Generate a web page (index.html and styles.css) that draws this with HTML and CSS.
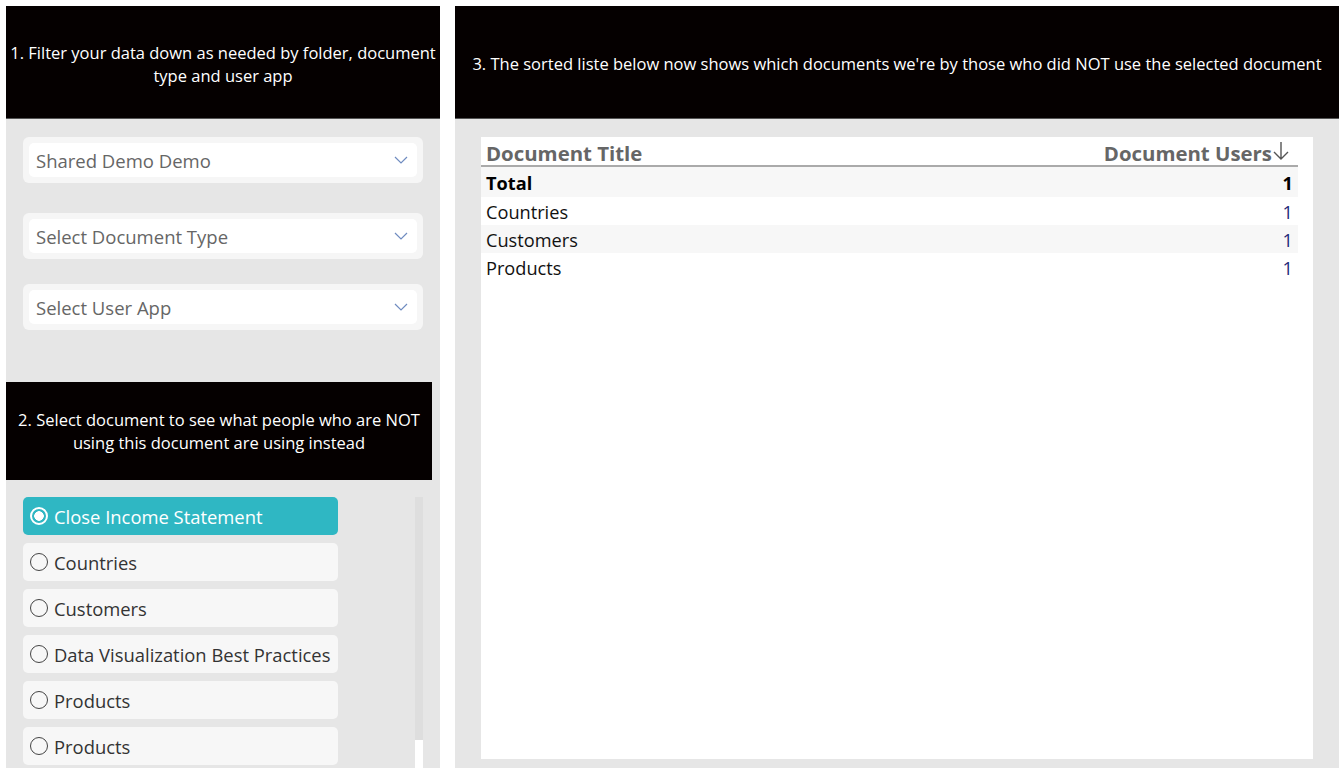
FILE: index.html
```html
<!DOCTYPE html>
<html lang="en">
<head>
    <meta charset="UTF-8">
    <title>Document Usage</title>
    <link rel="stylesheet" href="styles.css">
</head>
<body>
    <div class="page">
        <div class="left-panel">
            <div class="banner">1. Filter your data down as needed by folder, document type and user app</div>

            <div class="filters">
                <div class="dropdown">
                    <div class="dropdown-inner">
                        <span>Shared Demo Demo</span>
                        <svg class="chevron" width="14" height="8" viewBox="0 0 14 8"><path d="M1 1 L7 7 L13 1" fill="none" stroke="#6f8cc0" stroke-width="1.2"/></svg>
                    </div>
                </div>
                <div class="dropdown second">
                    <div class="dropdown-inner">
                        <span>Select Document Type</span>
                        <svg class="chevron" width="14" height="8" viewBox="0 0 14 8"><path d="M1 1 L7 7 L13 1" fill="none" stroke="#6f8cc0" stroke-width="1.2"/></svg>
                    </div>
                </div>
                <div class="dropdown third">
                    <div class="dropdown-inner">
                        <span>Select User App</span>
                        <svg class="chevron" width="14" height="8" viewBox="0 0 14 8"><path d="M1 1 L7 7 L13 1" fill="none" stroke="#6f8cc0" stroke-width="1.2"/></svg>
                    </div>
                </div>
            </div>

            <div class="banner banner-small">2. Select document to see what people who are NOT using this document are using instead</div>

            <div class="doc-list">
                <div class="items">
                    <div class="item selected"><span class="radio"></span>Close Income Statement</div>
                    <div class="item"><span class="radio"></span>Countries</div>
                    <div class="item"><span class="radio"></span>Customers</div>
                    <div class="item"><span class="radio"></span>Data Visualization Best Practices</div>
                    <div class="item"><span class="radio"></span>Products</div>
                    <div class="item"><span class="radio"></span>Products</div>
                </div>
                <div class="scrollbar"><div class="thumb"></div></div>
            </div>
        </div>

        <div class="right-panel">
            <div class="banner banner-wide">3. The sorted liste below now shows which documents we're by those who did NOT use the selected document</div>

            <div class="table-card">
                <div class="table">
                    <div class="row head">
                        <span>Document Title</span>
                        <span class="users">Document Users<svg class="sort" width="18" height="20" viewBox="0 0 18 20"><path d="M9 1 V18 M2 11 L9 18 L16 11" fill="none" stroke="#555" stroke-width="1.4"/></svg></span>
                    </div>
                    <div class="row total">
                        <span>Total</span>
                        <span>1</span>
                    </div>
                    <div class="row">
                        <span>Countries</span>
                        <span class="num">1</span>
                    </div>
                    <div class="row alt">
                        <span>Customers</span>
                        <span class="num">1</span>
                    </div>
                    <div class="row">
                        <span>Products</span>
                        <span class="num">1</span>
                    </div>
                </div>
            </div>
        </div>
    </div>
</body>
</html>
```

FILE: styles.css
```css
* {
    margin: 0;
    padding: 0;
    box-sizing: border-box;
    font-family: 'Open Sans', 'Noto Sans', sans-serif;
}

body {
    background: #fff;
    width: 1339px;
    height: 768px;
    overflow: hidden;
}

.page {
    display: flex;
    gap: 15px;
    padding: 6px 0 0 6px;
    height: 768px;
}

.left-panel {
    width: 434px;
    background: #e6e6e6;
    height: 762px;
}

.right-panel {
    flex: 1;
    background: #e6e6e6;
    height: 762px;
    display: flex;
    flex-direction: column;
}

.banner {
    background: #050000;
    color: #fff;
    height: 113px;
    display: flex;
    align-items: center;
    justify-content: center;
    text-align: center;
    font-size: 16.5px;
    line-height: 23px;
    padding: 3px 2px 0 2px;
    border-bottom: 1px solid #555;
}

.banner-small {
    width: 426px;
    height: 98px;
    margin-top: 52px;
    border-bottom: none;
    padding: 0 4px 0 4px;
}

.banner-wide {
    white-space: nowrap;
}

.filters {
    padding: 18px 17px 0 17px;
}

.dropdown {
    background: #f6f6f6;
    border-radius: 6px;
    padding: 6px;
    height: 46px;
}

.dropdown.second {
    margin-top: 30px;
}

.dropdown.third {
    margin-top: 25px;
}

.dropdown-inner {
    background: #fff;
    border-radius: 5px;
    height: 34px;
    display: flex;
    align-items: center;
    justify-content: space-between;
    padding: 0 8px 0 7px;
    color: #666;
    font-size: 18.5px;
}

.chevron {
    margin-right: 1px;
}

.doc-list {
    display: flex;
    padding: 17px 0 0 17px;
}

.items {
    width: 315px;
    display: flex;
    flex-direction: column;
    gap: 8px;
}

.item {
    height: 38px;
    background: #f7f7f7;
    border-radius: 5px;
    display: flex;
    align-items: center;
    padding-left: 7px;
    font-size: 18.4px;
    color: #333;
    white-space: nowrap;
}

.item.selected {
    background: #2fb7c3;
    color: #fff;
}

.radio {
    width: 18px;
    height: 18px;
    border: 1.5px solid #444;
    border-radius: 50%;
    margin-right: 6px;
    flex-shrink: 0;
}

.item.selected .radio {
    border: 2px solid #fff;
    background: radial-gradient(circle, #fff 0 4.5px, transparent 5px);
}

.scrollbar {
    width: 8px;
    margin-left: 77px;
    height: 271px;
    background: #fff;
}

.thumb {
    height: 243px;
    background: #dedede;
}

.table-card {
    background: #fff;
    margin: 18px 26px 0 26px;
    height: 622px;
    padding: 0 15px 0 0;
}

.row {
    display: flex;
    justify-content: space-between;
    align-items: center;
    height: 28px;
    padding: 2px 5px 0 5px;
    font-size: 18.2px;
    color: #111;
}

.row.head {
    height: 30px;
    padding-top: 3px;
    font-weight: 700;
    color: #666;
    font-size: 20.4px;
    border-bottom: 2px solid #aaa;
}

.users {
    display: flex;
    align-items: center;
    margin-right: 3px;
}

.sort {
    margin-top: -4px;
}

.row.total {
    height: 30px;
    background: #f7f7f7;
    font-weight: 700;
    color: #000;
}

.row.alt {
    background: #f7f7f7;
}

.num {
    color: #1f2a7a;
}
```
